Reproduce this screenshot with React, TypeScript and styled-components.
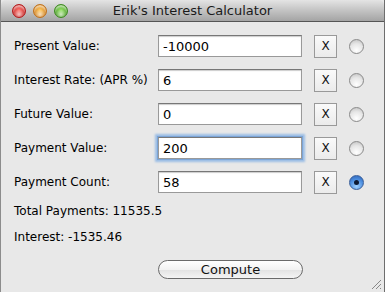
import styled, { createGlobalStyle } from 'styled-components'

const GlobalStyle = createGlobalStyle`
  html, body {
    margin: 0;
    padding: 0;
    background: #e8e8e8;
  }
  body {
    font-family: 'DejaVu Sans', 'Liberation Sans', sans-serif;
    font-size: 12px;
    color: #000;
  }
`

const Window = styled.div`
	width: 385px;
	height: 292px;
	box-sizing: border-box;
	display: flex;
	flex-direction: column;
	background: #e8e8e8;
	border-left: 1px solid #8c8c8c;
	border-right: 1px solid #6e6e6e;
	position: relative;
	overflow: hidden;
`

const TitleBar = styled.div`
	height: 22px;
	box-sizing: border-box;
	display: flex;
	align-items: center;
	position: relative;
	background: linear-gradient(#e4e4e4, #c6c6c6 45%, #a4a4a4);
	border-bottom: 1px solid #555;
	border-radius: 5px 5px 0 0;
`

const Lights = styled.div`
	display: flex;
	gap: 7px;
	padding-left: 11px;
	z-index: 1;
`

const Light = styled.span<{ $c: string; $d: string }>`
	width: 14px;
	height: 14px;
	border-radius: 50%;
	box-sizing: border-box;
	border: 1px solid ${p => p.$d};
	background: radial-gradient(circle at 50% 78%, #ffffffaa 0, transparent 50%),
		radial-gradient(circle at 50% 45%, ${p => p.$c}, ${p => p.$d});
	box-shadow: inset 0 2px 2px rgba(255, 255, 255, 0.6);
`

const Title = styled.div`
	position: absolute;
	left: 0;
	right: 0;
	text-align: center;
	font-size: 13px;
	color: #1a1a1a;
`

const Body = styled.div`
	display: flex;
	flex-direction: column;
	padding: 13px 0 0 13px;
`

const Rows = styled.div`
	display: flex;
	flex-direction: column;
	gap: 12px;
`

const Row = styled.div`
	display: flex;
	align-items: center;
	height: 22px;
`

const Label = styled.div`
	width: 144px;
`

const Field = styled.input<{ $focused?: boolean }>`
	width: 144px;
	height: 22px;
	box-sizing: border-box;
	padding: 1px 4px 0;
	font-family: inherit;
	font-size: 13px;
	border: 1px solid #999;
	border-top-color: #777;
	background: #fff;
	outline: none;
	box-shadow: ${p =>
		p.$focused ? '0 0 0 1px #7ba4d6, 0 0 2px 3px #9bbde5' : 'inset 0 1px 1px #ccc'};
`

const ClearButton = styled.button`
	margin-left: 12px;
	width: 23px;
	height: 23px;
	box-sizing: border-box;
	border: 1px solid #999;
	background: linear-gradient(#fafafa, #ebebeb);
	font-family: inherit;
	font-size: 12px;
	padding: 0;
	color: #111;
`

const Radio = styled.span<{ $on?: boolean }>`
	margin-left: 12px;
	width: 15px;
	height: 15px;
	border-radius: 50%;
	box-sizing: border-box;
	display: flex;
	align-items: center;
	justify-content: center;
	border: 1px solid ${p => (p.$on ? '#3a5f9a' : '#8a8a8a')};
	background: ${p =>
		p.$on
			? 'radial-gradient(circle at 50% 80%, #9fd1ff, #4d8fe0 55%, #2a5fb3)'
			: 'radial-gradient(circle at 50% 80%, #ffffff, #e6e6e6 55%, #bdbdbd)'};
	&::after {
		content: '';
		display: ${p => (p.$on ? 'block' : 'none')};
		width: 5px;
		height: 5px;
		border-radius: 50%;
		background: #0d1a33;
	}
`

const Info = styled.div`
	margin-top: 10px;
	height: 16px;
	line-height: 16px;
	& + & {
		margin-top: 10px;
	}
`

const ComputeRow = styled.div`
	display: flex;
	padding-left: 144px;
	margin-top: 15px;
`

const ComputeButton = styled.button`
	width: 145px;
	height: 19px;
	box-sizing: border-box;
	border-radius: 10px;
	border: 1px solid #6a6a6a;
	background: linear-gradient(#ffffff, #f2f2f2 50%, #e2e2e2 51%, #f4f4f4);
	font-family: inherit;
	font-size: 13px;
	padding: 0;
	color: #111;
`

const Grip = styled.svg`
	position: absolute;
	right: 2px;
	bottom: 2px;
`

const fields = [
	{ label: 'Present Value:', value: '-10000' },
	{ label: 'Interest Rate: (APR %)', value: '6' },
	{ label: 'Future Value:', value: '0' },
	{ label: 'Payment Value:', value: '200', focused: true },
	{ label: 'Payment Count:', value: '58', selected: true },
]

function App() {
	return (
		<>
			<GlobalStyle />
			<Window>
				<TitleBar>
					<Lights>
						<Light $c="#ff6b63" $d="#b3191a" />
						<Light $c="#ffc250" $d="#c0701a" />
						<Light $c="#8de05a" $d="#3c8a1f" />
					</Lights>
					<Title>Erik's Interest Calculator</Title>
				</TitleBar>
				<Body>
					<Rows>
						{fields.map(f => (
							<Row key={f.label}>
								<Label>{f.label}</Label>
								<Field $focused={f.focused} defaultValue={f.value} />
								<ClearButton>X</ClearButton>
								<Radio $on={f.selected} />
							</Row>
						))}
					</Rows>
					<Info>Total Payments: 11535.5</Info>
					<Info>Interest: -1535.46</Info>
					<ComputeRow>
						<ComputeButton>Compute</ComputeButton>
					</ComputeRow>
				</Body>
				<Grip width="12" height="12" viewBox="0 0 12 12">
					<path d="M11 2 L2 11 M11 6 L6 11 M11 10 L10 11" stroke="#888" strokeWidth="1" />
				</Grip>
			</Window>
		</>
	)
}

export default App
